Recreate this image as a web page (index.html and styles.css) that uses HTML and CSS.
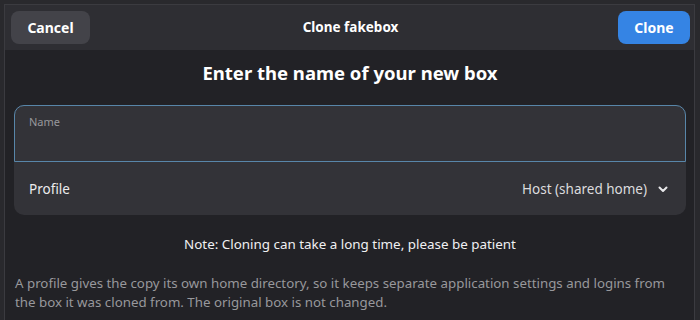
FILE: index.html
```html
<!DOCTYPE html>
<html>
<head>
<meta charset="utf-8">
<link rel="stylesheet" href="styles.css">
</head>
<body>
<div class="win">
  <header class="bar">
    <button class="btn cancel">Cancel</button>
    <div class="title">Clone fakebox</div>
    <button class="btn clone">Clone</button>
  </header>
  <main class="content">
    <h1 class="heading">Enter the name of your new box</h1>
    <div class="card">
      <div class="entry">
        <div class="label">Name</div>
      </div>
      <div class="row">
        <span class="row-title">Profile</span>
        <span class="row-value">Host (shared home)
          <svg class="chev" width="12" height="12" viewBox="0 0 12 12"><path d="M2.5 4.5 L6 8 L9.5 4.5" fill="none" stroke="#e8e8ea" stroke-width="2" stroke-linecap="round" stroke-linejoin="round"/></svg>
        </span>
      </div>
    </div>
    <p class="note">Note: Cloning can take a long time, please be patient</p>
    <p class="desc">A profile gives the copy its own home directory, so it keeps separate application settings and logins from the box it was cloned from. The original box is not changed.</p>
  </main>
</div>
</body>
</html>
```
FILE: styles.css
```css
html, body {
  margin: 0;
  padding: 0;
  height: 100%;
  background: #29292d;
  font-family: "Noto Sans", "Open Sans", sans-serif;
  overflow: hidden;
}
.win {
  margin: 4px 5px 0 4px;
  border: 1px solid #3b3b40;
  border-bottom: none;
  height: calc(100% - 5px);
  display: flex;
  flex-direction: column;
  background: #222226;
}
.bar {
  height: 45px;
  box-sizing: border-box;
  padding: 6px 4px 0 6px;
  background: #2e2e33;
  display: grid;
  grid-template-columns: 1fr auto 1fr;
  align-items: start;
}
.btn {
  border: none;
  border-radius: 8px;
  height: 33px;
  font-family: inherit;
  font-weight: 700;
  font-size: 14px;
  color: #ffffff;
  padding: 0;
}
.cancel {
  width: 79px;
  background: #434349;
  justify-self: start;
}
.clone {
  width: 72px;
  background: #3584e4;
  justify-self: end;
}
.title {
  font-weight: 700;
  font-size: 13.5px;
  color: #ffffff;
  line-height: 33px;
}
.content {
  padding: 0 8px 0 9px;
  flex: 1;
}
.heading {
  margin: 10px 0 0;
  text-align: center;
  font-size: 18.5px;
  font-weight: 700;
  color: #ffffff;
  line-height: 26px;
}
.card {
  margin-top: 19px;
  background: #333338;
  border-radius: 10px;
}
.entry {
  height: 57px;
  box-sizing: border-box;
  border: 1.5px solid #5886a9;
  border-radius: 10px 10px 0 0;
  padding: 8px 14px 0;
}
.label {
  font-size: 11px;
  color: #98989c;
  line-height: 16px;
}
.row {
  height: 53px;
  display: flex;
  align-items: center;
  justify-content: space-between;
  padding: 0 17px 0 15px;
}
.row-title {
  font-size: 13.5px;
  color: #ececee;
}
.row-value {
  font-size: 13.5px;
  color: #dcdcde;
  display: flex;
  align-items: center;
  gap: 10px;
}
.chev {
  display: block;
}
.note {
  margin: 19px 0 0;
  text-align: center;
  font-size: 13.4px;
  font-stretch: 87.5%;
  color: #f0f0f2;
  line-height: 20px;
}
.desc {
  margin: 20px 0 0 1px;
  font-size: 13.3px;
  font-stretch: 87.5%;
  color: #98989c;
  line-height: 19px;
}
```
